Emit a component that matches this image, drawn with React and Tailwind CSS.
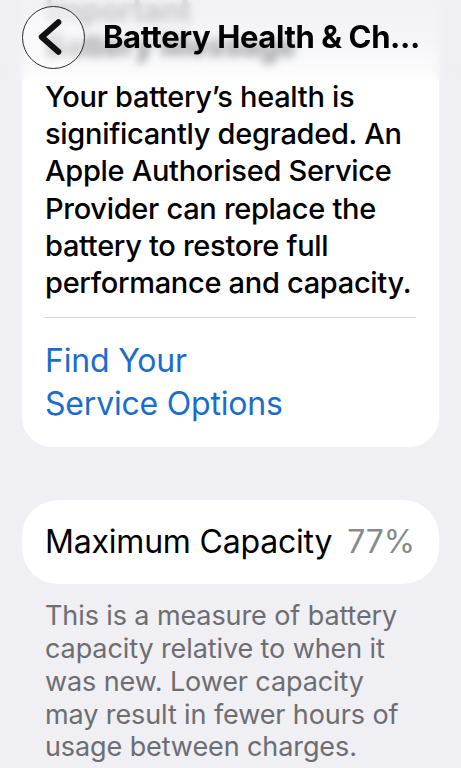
import React from 'react';

const font = { fontFamily: 'Inter, "Noto Sans", sans-serif' };

const BackChevron = () => (
  <svg viewBox="0 0 62 62" width={62} height={62} fill="none" stroke="#111" strokeWidth={6}
    strokeLinecap="round" strokeLinejoin="round">
    <path d="M36 16 19 31l17 15" />
  </svg>
);

export default function App() {
  return (
    <div className="relative w-[461px] h-[768px] overflow-hidden bg-[#efeff4] text-black" style={font}>
      {/* Scrolled content */}
      <div className="flex flex-col px-[22px]">
        {/* Battery message card */}
        <div className="-mt-[30px] bg-white rounded-[30px] pt-[22px] pb-[22px] px-[23px]">
          <h2 className="text-[31px] leading-[35px] font-bold tracking-[-0.3px] text-[#555]">
            Important<br />Battery Message
          </h2>
          <p className="mt-[16px] -mr-[10px] text-[29px] leading-[37.2px] font-medium tracking-[-0.3px]">
            Your battery’s health is significantly degraded. An Apple Authorised Service Provider can replace the battery to restore full performance and capacity.
          </p>
          <div className="mt-[16px] h-px bg-[#d6d6da]" />
          <a className="mt-[21px] block text-[32px] leading-[43px] text-[#1a6dcc] tracking-[-0.2px]">
            Find Your<br />Service Options
          </a>
        </div>

        {/* Capacity row */}
        <div className="mt-[53px] h-[84px] bg-white rounded-[36px] px-[23px] flex items-center">
          <span className="text-[32px] tracking-[-0.2px]">Maximum Capacity</span>
          <span className="ml-[15px] text-[32px] text-[#8a8a8e] tracking-[-0.1px]">77%</span>
        </div>

        <p className="mt-[16px] px-[23px] text-[27px] leading-[32.8px] text-[#6d6d72] tracking-[-0.1px]">
          This is a measure of battery capacity relative to when it was new. Lower capacity may result in fewer hours of usage between charges.
        </p>
      </div>

      {/* Navigation bar overlay */}
      <div className="absolute top-0 left-0 right-0 h-[80px] backdrop-blur-[4px] bg-gradient-to-b from-[#efeff4]/80 via-[#efeff4]/60 to-[#efeff4]/10">
        <div className="flex items-center h-[74px] pl-[22px] pr-[10px]">
          <button className="w-[63px] h-[63px] rounded-full border border-[#2a2a2a] bg-white/40 flex items-center justify-center shrink-0">
            <BackChevron />
          </button>
          <h1 className="ml-[18px] text-[31px] font-bold tracking-[-0.4px] whitespace-nowrap">
            Battery Health &amp; Ch...
          </h1>
        </div>
      </div>
    </div>
  );
}
